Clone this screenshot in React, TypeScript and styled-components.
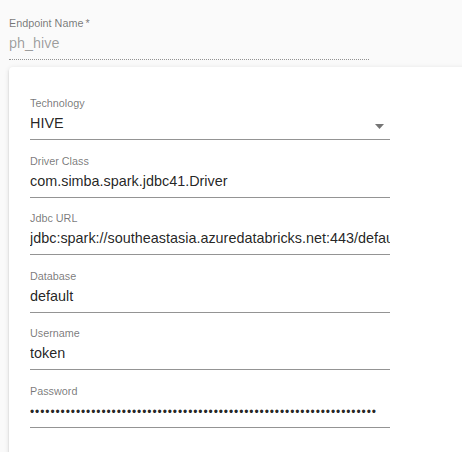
import React from "react";
import styled, { createGlobalStyle } from "styled-components";

const GlobalStyle = createGlobalStyle`
  html, body {
    margin: 0;
    padding: 0;
    background: #fafafa;
    overflow: hidden;
  }
  body {
    font-family: "Liberation Sans", Arial, Helvetica, sans-serif;
  }
`;

const Page = styled.div`
  padding: 16px 0 0 9px;
  display: flex;
  flex-direction: column;
  align-items: flex-start;
`;

const FieldWrap = styled.div`
  width: 360px;
  display: flex;
  flex-direction: column;
`;

const Label = styled.label`
  font-size: 10.8px;
  line-height: 14px;
  height: 14px;
  color: rgba(0, 0, 0, 0.54);
  white-space: nowrap;
`;

const InputRow = styled.div<{ $disabled?: boolean }>`
  margin-top: 4px;
  display: flex;
  align-items: flex-start;
  padding-bottom: 6px;
  border-bottom: 1px ${(p) => (p.$disabled ? "dotted" : "solid")}
    rgba(0, 0, 0, 0.42);
  font-size: 14.4px;
  line-height: 19px;
  height: 19px;
  color: ${(p) => (p.$disabled ? "rgba(0, 0, 0, 0.38)" : "rgba(0, 0, 0, 0.87)")};
`;

const Value = styled.span`
  flex: 1;
  min-width: 0;
  overflow: hidden;
  white-space: nowrap;
`;

const Dots = styled.span`
  font-size: 12px;
  letter-spacing: 0.9px;
`;

const Arrow = styled.svg`
  flex: none;
  width: 9px;
  height: 5px;
  margin-top: 9.5px;
  margin-right: 6px;
  fill: rgba(0, 0, 0, 0.54);
`;

const Card = styled.div`
  margin-top: 7px;
  width: 640px;
  min-height: 420px;
  box-sizing: border-box;
  padding: 29px 0 0 21px;
  background: #fff;
  border-radius: 4px;
  box-shadow: 0px 3px 1px -2px rgba(0, 0, 0, 0.2),
    0px 2px 2px 0px rgba(0, 0, 0, 0.14), 0px 1px 5px 0px rgba(0, 0, 0, 0.12);
  display: flex;
  flex-direction: column;
  gap: 13.5px;
`;

type FieldProps = {
  label: string;
  value?: string;
  disabled?: boolean;
  select?: boolean;
  password?: number;
};

const Field: React.FC<FieldProps> = ({ label, value, disabled, select, password }) => (
  <FieldWrap>
    <Label>{label}</Label>
    <InputRow $disabled={disabled}>
      <Value>
        {password ? <Dots>{"\u2022".repeat(password)}</Dots> : value}
      </Value>
      {select && (
        <Arrow viewBox="7 10 10 5" preserveAspectRatio="none">
          <path d="M7 10l5 5 5-5z" />
        </Arrow>
      )}
    </InputRow>
  </FieldWrap>
);

export default function App() {
  return (
    <>
      <GlobalStyle />
      <Page>
        <Field label={"Endpoint Name\u2009*"} value="ph_hive" disabled />
        <Card>
          <Field label="Technology" value="HIVE" select />
          <Field label="Driver Class" value="com.simba.spark.jdbc41.Driver" />
          <Field
            label="Jdbc URL"
            value="jdbc:spark://southeastasia.azuredatabricks.net:443/default;transportMode=http;ssl=1"
          />
          <Field label="Database" value="default" />
          <Field label="Username" value="token" />
          <Field label="Password" password={68} />
        </Card>
      </Page>
    </>
  );
}
